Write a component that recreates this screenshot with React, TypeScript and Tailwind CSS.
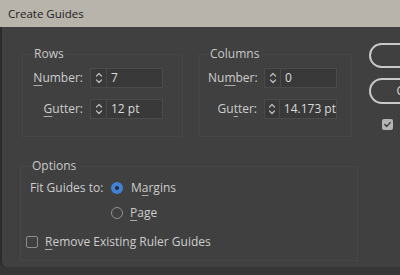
import React from 'react';

const font = { fontFamily: '"Open Sans", "Noto Sans", sans-serif' };

function Spin() {
  return (
    <svg width="8" height="14" viewBox="0 0 8 14" fill="none" stroke="#bdbdbd" strokeWidth="1.2" strokeLinecap="round" strokeLinejoin="round">
      <path d="M1.5 5 L4 2.5 L6.5 5" />
      <path d="M1.5 9 L4 11.5 L6.5 9" />
    </svg>
  );
}

function Field({ value }: { value: string }) {
  return (
    <div className="flex h-[20px] w-[73px] border border-[#4a4a4a] bg-[#393939]">
      <div className="flex w-[16px] items-center justify-center border-r border-[#4a4a4a]">
        <Spin />
      </div>
      <div className="flex items-center pl-[4px] text-[#dadada] whitespace-nowrap">{value}</div>
    </div>
  );
}

function Label({ pre, u, post }: { pre: string; u: string; post: string }) {
  return (
    <span className="text-right text-[#cdcdcd] whitespace-nowrap">
      {pre}
      <span className="underline underline-offset-[3px] decoration-[#aaaaaa]">{u}</span>
      {post}
    </span>
  );
}

export default function App() {
  return (
    <div className="w-[400px] h-[275px] overflow-hidden bg-[#363636] text-[12px] leading-[16px]" style={font}>
      <div className="h-[27px] bg-[#b8b3ab] flex items-center pl-[8px] text-[#232323] text-[11.5px]">
        Create Guides
      </div>
      <div className="h-[240px] bg-[#404040] border-l-2 border-[#2c2c2c] rounded-bl-[6px] flex">
        <div className="flex flex-col">
          <div className="flex mt-[19px] ml-[20px] gap-[16px]">
            <fieldset className="w-[161px] border border-[#464646] px-[10px] pb-[17px]">
              <legend className="px-[1px] text-[#c9c9c9]">Rows</legend>
              <div className="grid grid-cols-[56px_73px] gap-x-[7px] gap-y-[11px] items-center mt-[6px] -ml-[6px]">
                <Label pre="" u="N" post="umber:" />
                <Field value="7" />
                <Label pre="" u="G" post="utter:" />
                <Field value="12 pt" />
              </div>
            </fieldset>
            <fieldset className="w-[153px] border border-[#464646] px-[9px] pb-[17px]">
              <legend className="px-[1px] text-[#c9c9c9]">Columns</legend>
              <div className="grid grid-cols-[49px_73px] gap-x-[7px] gap-y-[11px] items-center mt-[6px] -ml-[1px]">
                <Label pre="Nu" u="m" post="ber:" />
                <Field value="0" />
                <Label pre="Gu" u="t" post="ter:" />
                <Field value="14.173 pt" />
              </div>
            </fieldset>
          </div>
          <fieldset className="mt-[21px] ml-[18px] w-[338px] h-[103px] border border-[#464646] px-[10px]">
            <legend className="px-[1px] text-[#c9c9c9]">Options</legend>
            <div className="flex items-center mt-[6px] -ml-[1px] text-[#cdcdcd]">
              <span className="w-[81px]">Fit Guides to:</span>
              <span className="w-[12px] h-[12px] rounded-full bg-[#3f82d6] flex items-center justify-center">
                <span className="w-[4px] h-[4px] rounded-full bg-[#2b2b2b]" />
              </span>
              <span className="ml-[8px]">
                M<span className="underline underline-offset-[3px] decoration-[#aaaaaa]">a</span>rgins
              </span>
            </div>
            <div className="flex items-center mt-[9px] ml-[80px] text-[#cdcdcd]">
              <span className="w-[12px] h-[12px] rounded-full border-[1.5px] border-[#909090]" />
              <span className="ml-[7px]">
                <span className="underline underline-offset-[3px] decoration-[#aaaaaa]">P</span>age
              </span>
            </div>
            <div className="flex items-center mt-[13px] -ml-[5px] text-[#cdcdcd]">
              <span className="w-[12px] h-[12px] rounded-[2px] border border-[#8c8c8c]" />
              <span className="ml-[7px] whitespace-nowrap">
                <span className="underline underline-offset-[3px] decoration-[#aaaaaa]">R</span>emove Existing Ruler Guides
              </span>
            </div>
          </fieldset>
        </div>
        <div className="flex flex-col ml-[11px] pt-[16px]">
          <div className="w-[92px] h-[25px] rounded-full border-2 border-[#c9c9c9] flex items-center justify-center text-[#dadada]">
            OK
          </div>
          <div className="w-[92px] h-[26px] mt-[10px] rounded-full border-2 border-[#c9c9c9] flex items-center justify-center text-[#dadada]">
            Cancel
          </div>
          <div className="mt-[15px] ml-[13px] w-[11px] h-[11px] rounded-[2px] bg-[#b4b4b4] flex items-center justify-center">
            <svg width="9" height="9" viewBox="0 0 9 9" fill="none" stroke="#3a3a3a" strokeWidth="1.4" strokeLinecap="round" strokeLinejoin="round">
              <path d="M1.8 4.6 L3.7 6.4 L7.2 2.6" />
            </svg>
          </div>
        </div>
      </div>
    </div>
  );
}
